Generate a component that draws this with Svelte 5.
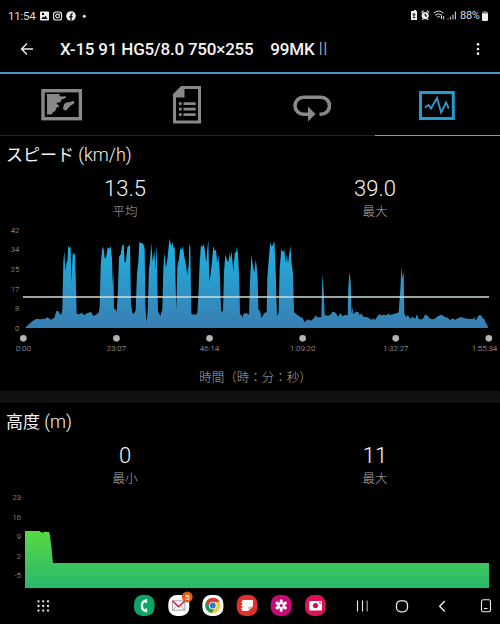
<script lang="ts">
  // chart coordinates are in thirds of a pixel
  const speed =
    "75,318 85,308 95,299 108,290 120,292 133,291 142,286 153,293 163,287 169,267 174,267 180,275 184,278 187,262 190,120 193,87 196,147 200,120 202,118 205,70 209,78 212,74 214,182 218,93 222,100 225,90 227,155 230,275 238,277 246,272 252,280 262,273 274,270 278,280 284,281 290,276 296,272 299,255 302,135 306,82 310,75 314,108 318,109 323,76 328,80 332,72 336,110 338,187 340,142 342,262 346,260 350,270 353,225 357,105 362,97 366,72 371,66 374,122 378,118 382,76 386,72 390,68 393,245 397,272 402,275 407,265 411,155 415,120 418,60 424,64 428,64 432,72 434,82 436,245 439,302 443,268 447,140 450,118 454,62 458,120 463,84 466,141 470,67 474,268 481,282 487,262 490,142 493,92 498,137 503,106 508,50 514,72 518,60 520,78 524,74 526,148 529,266 532,135 537,110 541,78 545,84 549,72 553,105 558,130 562,160 566,128 568,66 571,74 574,275 580,278 584,276 588,279 592,272 595,225 599,122 603,70 608,74 612,66 616,100 619,121 622,80 625,54 628,178 632,155 637,108 640,72 644,86 648,84 652,124 655,98 659,145 662,232 664,270 669,266 672,150 676,98 681,114 685,121 689,92 691,110 694,88 697,110 700,150 704,94 708,90 711,75 714,95 718,180 720,280 724,276 727,287 731,275 738,273 747,278 750,180 754,98 758,126 763,152 767,113 770,132 773,170 775,262 780,267 785,288 792,274 800,270 802,165 807,104 811,60 815,74 819,68 823,56 827,145 831,282 836,272 839,140 844,80 849,90 853,84 857,124 861,96 864,125 868,92 871,72 875,125 879,155 882,270 888,276 900,284 908,288 914,301 923,292 932,296 940,290 948,280 952,286 964,286 967,155 971,205 974,278 983,282 990,279 998,270 1004,270 1010,277 1014,284 1021,274 1028,283 1032,280 1036,279 1043,280 1045,198 1048,150 1052,178 1055,275 1057,254 1060,276 1068,269 1074,270 1080,280 1084,274 1090,284 1102,286 1110,290 1116,294 1120,288 1125,294 1130,286 1138,276 1142,280 1152,278 1160,280 1165,274 1170,279 1180,276 1190,274 1196,271 1199,230 1202,186 1204,132 1207,168 1211,150 1213,275 1218,284 1224,280 1231,291 1237,284 1246,290 1250,277 1257,292 1268,292 1275,278 1280,279 1285,284 1290,290 1300,292 1307,288 1316,281 1326,278 1334,285 1343,287 1350,294 1358,289 1365,293 1374,289 1382,285 1390,288 1402,290 1420,291 1423,282 1425,294 1430,292 1434,282 1441,278 1447,286 1450,290 1454,292 1457,304 1461,306 1464,318"

  const altitude =
    "75,309 75,138 119,138 122,142 125,141 128,144 132,140 147,141 150,150 152,168 154,182 159,234 1467,234 1467,309"

  const speedTicks = ["42", "34", "25", "17", "8", "0"]
  const altitudeTicks = ["23", "16", "9", "2", "-5"]
  const times = ["0:00", "23:07", "46:14", "1:09:20", "1:32:27", "1:55:34"]
</script>

<div class="screen">
  <div class="status">
    <span class="clock">11:54</span>
    <svg class="notes" width="48" height="10" viewBox="0 0 48 10">
      <path fill="#eee" fill-rule="evenodd" d="M1 .5h7a1 1 0 0 1 1 1v7a1 1 0 0 1-1 1H1a1 1 0 0 1-1-1v-7a1 1 0 0 1 1-1ZM1.5 8h6L5.5 4.8 4 6.5 3 5.5ZM2 2v2h2V2Z" />
      <g fill="none" stroke="#eee" stroke-width="1.1">
        <rect x="13.6" y="1" width="8" height="8" rx="2.3" />
        <circle cx="17.6" cy="5" r="1.9" />
      </g>
      <circle cx="20" cy="2.7" r=".5" fill="#eee" />
      <circle cx="31" cy="5" r="4.8" fill="#eee" />
      <path d="M31 9.8V4.2q0-1.5 1.8-1.5M29.2 5.8h3.4" fill="none" stroke="#000" stroke-width="1.3" />
      <circle cx="44.3" cy="5.2" r="1.5" fill="#eee" />
    </svg>
    <svg class="system" width="46" height="11" viewBox="0 0 46 11">
      <path fill="#eee" d="M2 1h2V0h2v1h1v9H1V1Z" />
      <path d="M4 3.2 2.8 5h2.4L4 3.2M4 5v3M2.7 7.6h2.6" fill="none" stroke="#000" stroke-width=".8" />
      <circle cx="15.2" cy="5.6" r="3.6" fill="#eee" />
      <path d="m11.5 2.6 2-2M19 2.6l-2-2M12.2 9.8l1-1M18.2 9.8l-1-1" stroke="#eee" stroke-width="1.2" />
      <path d="M15.2 3.5V6h2" fill="none" stroke="#000" />
      <g fill="none" stroke="#ddd">
        <path d="M23.5 3.2q5-4.2 10 0M25 5.2q3.5-2.8 7 0M26.8 7.2q1.7-1.4 3.4 0" />
        <path d="M31.5 5.5V9M33.7 6v3.5" />
      </g>
      <path d="M38 9.5v-1M40.5 9.5V6.8M43 9.5V4.5M45.4 9.5V1.5" stroke="#ccc" stroke-width="1.1" />
    </svg>
    <span class="percent">88%</span>
    <svg width="6" height="10" viewBox="0 0 6 10">
      <path d="M1.5 0h3v1H6v2H0V1h1.5Z" fill="#777" />
      <path d="M0 2.5h6V9q0 1-1 1H1Q0 10 0 9Z" fill="#eee" />
    </svg>
  </div>

  <header>
    <svg width="14" height="14" viewBox="0 0 14 14">
      <path d="M13 7H1.5M7 1.5 1.5 7 7 12.5" fill="none" stroke="#eee" stroke-width="1.4" />
    </svg>
    <h1>X-15 91 HG5/8.0 750×255　99MK<span>Ⅱ</span></h1>
    <svg width="4" height="14" viewBox="0 0 4 14">
      <g fill="#eee">
        <circle cx="2" cy="2.3" r="1.35" />
        <circle cx="2" cy="7" r="1.35" />
        <circle cx="2" cy="11.7" r="1.35" />
      </g>
    </svg>
  </header>

  <nav class="tabs">
    <button aria-label="map">
      <svg width="42" height="38" viewBox="0 0 42 38">
        <rect x="2" y="4.7" width="37.4" height="28" fill="none" stroke="#888" stroke-width="3.4" />
        <path fill="#888" d="M6 8h12.5v1.7q0 .8 2 .8l3.5-.3q2 .3.7 1.8l-2.5 1q-2.2 0-2.2 1.3.5 2-1 2l-2.5.2q-2 .8.5 2.3 2.5 1.5 0 2.5-2.3 0-2.3 2.2.5 1.8-1.5 2l-1.7 1.5-1 1.5H6ZM22.5 20.5q0-3 3-4l4.5-.8q1.2-1 2.8-.5 1.3 1.3 0 2.5l-3.3 2q-1.5 1-2.5 2.7-1 2-2.8 2.2-2.3-.2-2.2-2.5Z" />
      </svg>
    </button>
    <button aria-label="details">
      <svg width="28" height="38" viewBox="0 0 28 38">
        <path d="M1.5 8.8 8.7 1.6H26.5V36H1.5Z" fill="none" stroke="#888" stroke-width="3" />
        <path d="M1 9 9 1h2.5v10.5H1Z" fill="#888" />
        <path d="M10.5 17.6h12.2M10.5 23.1h12.2M10.5 28.6h12.2" stroke="#888" stroke-width="2.6" />
        <g fill="#888">
          <circle cx="7.3" cy="17.6" r="1.6" />
          <circle cx="7.3" cy="23.1" r="1.6" />
          <circle cx="7.3" cy="28.6" r="1.6" />
        </g>
      </svg>
    </button>
    <button aria-label="laps">
      <svg width="38" height="38" viewBox="0 0 38 38">
        <path d="M15 28.2H10.5a8.5 8.5 0 0 1 0-17H28a8.5 8.5 0 0 1 0 17h-1.5" fill="none" stroke="#888" stroke-width="3.6" />
        <path d="M15 20.5 22.5 28 15 35.5Z" fill="#888" />
      </svg>
    </button>
    <button class="active" aria-label="charts">
      <svg width="36" height="38" viewBox="0 0 36 38">
        <rect x="1.5" y="6.5" width="32.8" height="26" fill="none" stroke="#259bd2" stroke-width="3" />
        <path d="M6 21.5 9.5 19 12 22.5 18 12 22.2 26.5 27 16.5 29.8 22.5" fill="none" stroke="#3594c4" stroke-width="1.9" />
      </svg>
    </button>
  </nav>

  <section>
    <h2>スピード <span>(km/h)</span></h2>
    <div class="stats">
      <div><b>13.5</b><small>平均</small></div>
      <div><b>39.0</b><small>最大</small></div>
    </div>
    <svg class="chart" width="500" height="135" viewBox="0 0 1500 405">
      <defs>
        <linearGradient id="blue" x1="0" y1="50" x2="0" y2="318" gradientUnits="userSpaceOnUse">
          <stop offset="0" stop-color="#1cb4e4" />
          <stop offset="1" stop-color="#397eb2" />
        </linearGradient>
      </defs>
      {#each speedTicks as tick, i}
        <text class="tick" x="58" y={32 + i * 59}>{tick}</text>
      {/each}
      <polygon points={speed} fill="url(#blue)" />
      <path d="M69 225H1467" stroke="#cfdcd8" stroke-width="5" />
      {#each times as time, i}
        <circle cx={70 + i * 279.3} cy="349" r="10" fill="#b2b2b2" />
        <text class="time" x={70 + i * 279.3 - (i == 5 ? 13 : 0)} y="387">{time}</text>
      {/each}
    </svg>
    <p>時間（時：分：秒）</p>
  </section>

  <section class="second">
    <h2>高度 <span>(m)</span></h2>
    <div class="stats">
      <div><b>0</b><small>最小</small></div>
      <div><b>11</b><small>最大</small></div>
    </div>
    <svg class="chart" width="500" height="103" viewBox="0 0 1500 309">
      <defs>
        <linearGradient id="green" x1="0" y1="138" x2="0" y2="309" gradientUnits="userSpaceOnUse">
          <stop offset="0" stop-color="#57d943" />
          <stop offset="1" stop-color="#2ab86d" />
        </linearGradient>
      </defs>
      {#each altitudeTicks as tick, i}
        <text class="tick" x="63" y={45 + i * 58.8}>{tick}</text>
      {/each}
      <polygon points={altitude} fill="url(#green)" />
    </svg>
  </section>

  <footer>
    <svg width="500" height="36" viewBox="0 588 500 36">
      <g fill="#eee">
        {#each [601.3, 606, 610.6] as y}
          {#each [38.5, 43.2, 48] as x}
            <circle cx={x} cy={y} r="1.15" />
          {/each}
        {/each}
      </g>

      <rect x="134" y="595" width="20.6" height="21" rx="8.5" fill="#0da565" />
      <path d="M146.5 600.6q-4.6.2-4.6 5.2t4.6 5.2" fill="none" stroke="#fff" stroke-width="2.3" />
      <path d="M145.2 599.3h1.9v3.6h-1.9ZM145.2 608.6h1.9v3.7h-1.9Z" fill="#fff" />

      <rect x="168.3" y="595" width="21" height="21" rx="8.5" fill="#fff" />
      <rect x="172.5" y="600.8" width="12.4" height="9.4" fill="#f4f4f4" stroke="#a99" stroke-width=".9" />
      <path d="m172.7 610 4-4.2M184.7 610l-4-4.2" stroke="#a99" stroke-width=".8" />
      <path d="m172.6 601 6.1 5.8 6.1-5.8" fill="none" stroke="#c51d50" stroke-width="1.4" />
      <circle cx="187.3" cy="597" r="5.4" fill="#df5d20" />
      <text class="badge" x="187.3" y="600">5</text>

      <rect x="202.4" y="595" width="21" height="21" rx="8.5" fill="#fff" />
      <circle cx="212.8" cy="605.5" r="7.6" fill="#fbc52d" />
      <path d="M212.8 605.5 206.2 601.7a7.6 7.6 0 0 0 5.5 11.3l3-5.2Z" fill="#229954" />
      <path d="M206.2 601.7a7.6 7.6 0 0 1 13.4.2h-6.8l-3.1 5.2Z" fill="#d93a30" />
      <circle cx="212.8" cy="605.5" r="3.8" fill="#fff" />
      <circle cx="212.8" cy="605.5" r="2.9" fill="#2874df" />

      <rect x="236.7" y="595" width="20.8" height="21" rx="8.5" fill="#df3029" />
      <path d="M242.3 600h10.6v6.5l-4.5 4.5h-6.1Z" fill="#fff" />
      <path d="M248.5 611v-4.4h4.4Z" fill="#eca5a2" />
      <path d="M241 602.3h2M241 605.5h2M241 608.7h2" stroke="#fff" stroke-width="1.1" />

      <rect x="270.8" y="595" width="20.8" height="21" rx="8.5" fill="#ca0878" />
      <g stroke="#fff" stroke-width="3" stroke-linecap="round">
        {#each [0, 60, 120] as angle}
          <path d="M281.2 600.7v9.6" transform="rotate({angle} 281.2 605.5)" />
        {/each}
      </g>
      <circle cx="281.2" cy="605.5" r="1.5" fill="#ca0878" />

      <rect x="305" y="595" width="20.8" height="21" rx="8.5" fill="#dc1258" />
      <rect x="309.2" y="601" width="12.8" height="9.6" rx="1" fill="#fff" />
      <circle cx="315.5" cy="605.5" r="2.6" fill="#c51055" />
      <circle cx="320" cy="602.8" r=".9" fill="#dc1258" />

      <g fill="none" stroke="#eee" stroke-width="1.1">
        <path d="M357.5 600.5v11M362.5 600.5v11" />
        <path d="M367.2 600.5v11" stroke="#888" stroke-width="1.4" />
        <rect x="396.5" y="600.8" width="11" height="11" rx="4.2" stroke-width="1.3" />
        <path d="m444.7 601-5 5.2 5 5.3" stroke-width="1.4" />
        <rect x="481.5" y="599.8" width="9" height="12" rx="1.8" />
        <path d="M484 608.5h3.5" />
      </g>
    </svg>
  </footer>
</div>

<style>
  :global(body) {
    margin: 0;
    background: #000;
  }

  .screen {
    width: 500px;
    height: 624px;
    display: flex;
    flex-direction: column;
    overflow: hidden;
    background: #000;
    color: #f4f4f4;
    font-family: Roboto, "Noto Sans CJK JP", sans-serif;
  }

  .status {
    height: 31px;
    display: flex;
    align-items: center;
    box-sizing: border-box;
    padding: 0 12px 0 8px;
    font-size: 11px;
    color: #ddd;
  }

  .clock {
    width: 32px;
    font-size: 11.5px;
    letter-spacing: -0.25px;
  }

  .system {
    margin-left: auto;
  }

  .percent {
    width: 20px;
    margin: 0 2px 0 4px;
    font-size: 11px;
    letter-spacing: -0.3px;
  }

  header {
    height: 41px;
    display: flex;
    align-items: center;
    box-sizing: border-box;
    padding: 0 20px 5px;
  }

  h1 {
    flex: 1;
    margin: 0 0 0 26px;
    font-size: 17px;
    line-height: 24px;
    font-weight: 500;
    letter-spacing: -0.2px;
    white-space: pre;
  }

  h1 span {
    font-weight: 300;
    color: #bbb;
  }

  .tabs {
    height: 64px;
    box-sizing: border-box;
    display: flex;
    border-top: 2px solid #479ac0;
  }

  button {
    flex: 1;
    display: flex;
    align-items: center;
    justify-content: center;
    border: none;
    border-bottom: 1px solid #242424;
    padding: 0 1px 0 0;
    background: none;
  }

  .active {
    border-color: #7a9bd6;
  }

  section {
    flex: none;
    height: 255px;
  }

  .second {
    height: 185px;
    border-top: 12px solid #111;
    box-sizing: border-box;
    height: 197px;
  }

  h2 {
    margin: 0;
    height: 39px;
    padding-left: 6px;
    font-size: 17px;
    line-height: 38px;
    font-weight: 400;
  }

  h2 span {
    font-size: 18px;
    font-weight: 300;
  }

  .stats {
    display: flex;
    height: 47px;
  }

  .second .stats {
    height: 43px;
  }

  .stats div {
    flex: 1;
    text-align: center;
  }

  b {
    display: block;
    font-size: 22px;
    line-height: 28px;
    font-weight: 300;
  }

  small {
    display: block;
    font-size: 12.5px;
    line-height: 18px;
    font-weight: 300;
    color: #aaa;
  }

  .chart {
    display: block;
  }

  .tick,
  .time {
    font-size: 23px;
    font-weight: 300;
    fill: #bbb;
    text-anchor: end;
  }

  .time {
    font-size: 24px;
    text-anchor: middle;
  }

  p {
    margin: 0;
    padding: 1px 0 0 11px;
    font-size: 12.5px;
    line-height: 40px;
    font-weight: 300;
    text-align: center;
    color: #aaa;
  }

  footer {
    height: 36px;
  }

  .badge {
    font-size: 8px;
    fill: #fff;
    text-anchor: middle;
  }
</style>
